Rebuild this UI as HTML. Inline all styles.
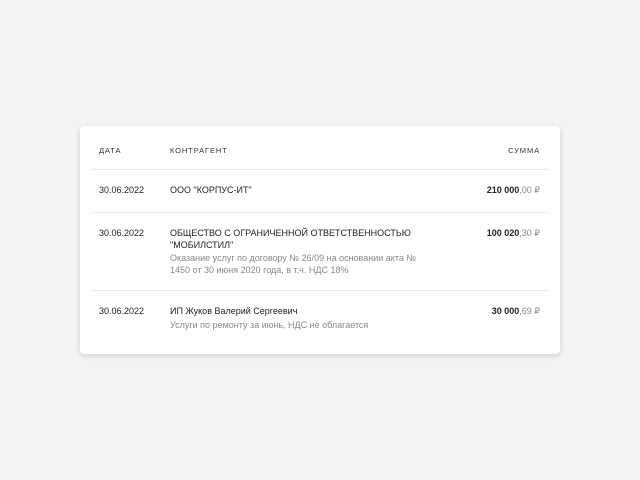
<!DOCTYPE html>
<html><head><meta charset="utf-8"><style>
*{margin:0;padding:0;box-sizing:border-box}
body{width:640px;height:480px;background:#f3f4f6;font-family:"Liberation Sans",sans-serif;position:relative;overflow:hidden}
.card{position:absolute;left:80px;top:126px;width:480px;height:228px;background:#fff;border-radius:4px;box-shadow:0 2px 6px rgba(0,0,0,.15)}
.t{position:absolute;font-size:9px;color:#222;white-space:nowrap;line-height:12px}
.h{font-size:7.5px;letter-spacing:.9px;color:#333}
.g{color:#888}
.r{right:20px;text-align:right}
.line{position:absolute;left:10px;right:10px;height:1px;background:#e8e9eb}
b{font-weight:bold}
.c{color:#888}
</style></head><body>
<div class="card">
<div class="t h" style="left:19px;top:19px">ДАТА</div>
<div class="t h" style="left:90px;top:19px">КОНТРАГЕНТ</div>
<div class="t h r" style="top:19px">СУММА</div>
<div class="line" style="top:43px"></div>
<div class="t" style="left:19px;top:58px">30.06.2022</div>
<div class="t" style="left:90px;top:58px">ООО "КОРПУС-ИТ"</div>
<div class="t r" style="top:58px"><b>210 000</b><span class="c">,00 ₽</span></div>
<div class="line" style="top:86px"></div>
<div class="t" style="left:19px;top:101px">30.06.2022</div>
<div class="t" style="left:90px;top:101px">ОБЩЕСТВО С ОГРАНИЧЕННОЙ ОТВЕТСТВЕННОСТЬЮ<br>"МОБИЛСТИЛ"</div>
<div class="t g" style="left:90px;top:126px">Оказание услуг по договору № 26/09 на основании акта №<br>1450 от 30 июня 2020 года, в т.ч. НДС 18%</div>
<div class="t r" style="top:101px"><b>100 020</b><span class="c">,30 ₽</span></div>
<div class="line" style="top:164px"></div>
<div class="t" style="left:19px;top:179px">30.06.2022</div>
<div class="t" style="left:90px;top:179px">ИП Жуков Валерий Сергеевич</div>
<div class="t g" style="left:90px;top:193px">Услуги по ремонту за июнь, НДС не облагается</div>
<div class="t r" style="top:179px"><b>30 000</b><span class="c">,69 ₽</span></div>
</div>
</body></html>
